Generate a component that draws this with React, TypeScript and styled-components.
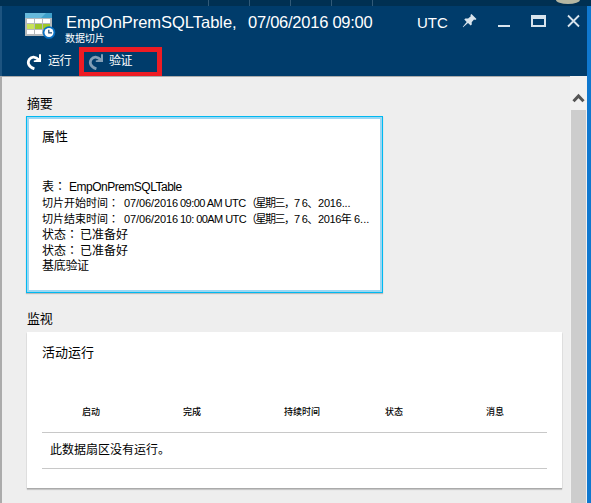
import React from "react";
import styled, { createGlobalStyle } from "styled-components";

const GlobalStyle = createGlobalStyle`
  * { box-sizing: border-box; }
  body {
    margin: 0;
    overflow: hidden;
    font-family: "Liberation Sans", "Noto Sans CJK SC", sans-serif;
    color: #000;
  }
`;

const Blade = styled.div`
  width: 591px;
  height: 503px;
  display: flex;
  flex-direction: column;
  border-right: 4px solid #0f78cf;
  background: #eee;
`;

const TopStrip = styled.div`
  flex: none;
  display: flex;
  justify-content: flex-end;
  width: 591px;
  height: 6px;
  padding-right: 11px;
  background: #003052;
  position: relative;
  z-index: 1;
`;

const Tick = styled.i`
  width: 41px;
  border-left: 1px solid #315a78;
`;

const TickRow = styled.div`
  display: flex;
  width: 348px;
`;

const Avatar = styled.div`
  width: 24px;
  height: 4px;
  border-radius: 0 0 50% 50% / 0 0 100% 100%;
  background: #b5b7a2;
`;

const Header = styled.header`
  flex: none;
  height: 70px;
  background: #003c6b;
  border-left: 2px solid #1d5480;
  color: #fff;
`;

const TitleBar = styled.div`
  display: flex;
  height: 41px;
  padding-left: 22px;
`;

const TitleIcon = styled.svg`
  flex: none;
  width: 32px;
  height: 28px;
  margin-top: 6px;
`;

const Titles = styled.div`
  width: 350px;
  padding-left: 9px;
`;

const TitleLine = styled.h1`
  display: flex;
  margin: 0;
  padding: 6px 0 0 1px;
  font-size: 16.5px;
  font-weight: 400;
  line-height: 20px;
`;

const Subtitle = styled.div`
  padding-top: 1px;
  font-size: 10px;
  line-height: 12px;
  letter-spacing: -0.1px;
`;

const Zone = styled.span`
  width: 42px;
  margin-left: 11px;
  padding-top: 6px;
  font-size: 15px;
  line-height: 21px;
`;

const WindowIcon = styled.svg<{ $gap: number; $w: number }>`
  flex: none;
  width: ${(p) => p.$w}px;
  height: 16px;
  margin: 7px 0 0 ${(p) => p.$gap}px;
`;

const Toolbar = styled.div`
  display: flex;
  height: 30px;
  padding-left: 24px;
`;

const Command = styled.button<{ $w: number; $marked?: boolean }>`
  display: flex;
  align-items: center;
  gap: ${(p) => (p.$marked ? 6 : 7)}px;
  width: ${(p) => p.$w}px;
  height: 30px;
  padding: 0 0 2px ${(p) => (p.$marked ? 4 : 0)}px;
  border: ${(p) => (p.$marked ? "5px solid #ed1c24" : "0")};
  background: none;
  color: #fff;
  font: 12px/16px "Liberation Sans", "Noto Sans CJK SC", sans-serif;
  letter-spacing: -0.4px;
  svg { flex: none; }
`;

const Body = styled.div`
  flex: 1;
  display: flex;
  min-height: 0;
  border-left: 2px solid #ababab;
`;

const Content = styled.main`
  flex: 1;
  padding: 18px 0 0 24px;
  border-top: 1px solid #ababab;
`;

const SectionTitle = styled.h2<{ $h: number; $top?: number }>`
  height: ${(p) => p.$h}px;
  margin: 0;
  padding: ${(p) => p.$top ?? 0}px 0 0 1px;
  font-size: 13px;
  font-weight: 400;
  line-height: 18px;
  letter-spacing: -0.2px;
`;

const SummaryCard = styled.section`
  width: 357px;
  height: 177px;
  padding: 10px 10px 0 15px;
  border: 1px solid #00b9f1;
  box-shadow: inset 0 0 0 2px #9bd7f3, 0 1px 1px #bbb;
  background: #fff;
`;

const CardTitle = styled.h3<{ $h: number }>`
  height: ${(p) => p.$h}px;
  margin: 0;
  font-size: 13px;
  font-weight: 400;
  line-height: 20px;
`;

const Line = styled.div<{ $size: number }>`
  display: flex;
  height: 15.9px;
  font-size: ${(p) => p.$size}px;
  line-height: 16px;
  white-space: pre;
`;

const Run = styled.span<{ $w?: number; $ls?: number }>`
  flex: none;
  width: ${(p) => (p.$w ? `${p.$w}px` : "auto")};
  letter-spacing: ${(p) => p.$ls ?? 0}px;
  white-space: pre;
`;

const Colon = styled.span`
  font-family: "Liberation Sans", "Noto Sans CJK TC", sans-serif;
`;

const MonitorCard = styled.section`
  width: 535px;
  height: 156px;
  margin-left: 1px;
  padding: 11px 15px 0;
  background: #fff;
  box-shadow: 0 1px 1px #aaa, 0 2px 1px #ccc;
`;

const HeadRow = styled.div`
  display: grid;
  grid-template-columns: repeat(5, 101px);
  height: 40px;
  padding: 13px 0 0 40px;
  border-bottom: 1px solid #c8c8c8;
  font-size: 9px;
  font-weight: 500;
  line-height: 12px;
`;

const EmptyRow = styled.div`
  height: 36px;
  padding-left: 8px;
  border-bottom: 1px solid #c8c8c8;
  font-size: 12px;
  line-height: 34px;
`;

const Scrollbar = styled.div`
  display: flex;
  flex-direction: column;
  width: 17px;
  padding: 16px 1px 0;
  background: #f1f1f1;
`;

const Thumb = styled.div`
  flex: 1;
  margin-top: 6px;
  background: #cdcdcd;
`;

const Redo = ({ color }: { color: string }) => (
  <svg width="15" height="17" viewBox="0 0 15 17">
    <path
      d="M8.4 15.8 C2.6 14 1 9.6 3.4 6.2 C5.6 3.2 9.4 3.2 13 7"
      fill="none"
      stroke={color}
      strokeWidth="2.8"
    />
    <path d="M15 1.2 V9 H7.8 V7.4 L11.5 6.8 L13 5.2 V1.2Z" fill={color} />
  </svg>
);

const columns = ["启动", "完成", "持续时间", "状态", "消息"];

export default function App() {
  return (
    <>
      <GlobalStyle />
      <Blade>
        <TopStrip>
          <TickRow>
            {[0, 1, 2, 3, 4].map((n) => <Tick key={n} />)}
          </TickRow>
          <Avatar />
        </TopStrip>
        <Header>
          <TitleBar>
            <TitleIcon viewBox="0 0 32 28">
              <path d="M1 1H28V24H1Z" fill="#b5b9bb" />
              <path d="M1 1H28V6H1Z" fill="#3fa0cb" />
              <path d="M1 1H22L17 6H1Z" fill="#66b9dc" />
              <path d="M3 7h7v4H3zM11 7h7v4h-7zM19 7h7v4h-7zM3 18h7v4H3zM11 18h7v4h-7zM19 18h7v4h-7z" fill="#fff" />
              <path d="M3 12h7v5H3z" fill="#c8e35a" />
              <path d="M11 12h7v5h-7zM19 12h7v5h-7z" fill="#9ec829" />
              <circle cx="25" cy="20.5" r="6.3" fill="#0871c5" />
              <circle cx="25" cy="20.5" r="4.5" fill="#fff" />
              <path d="M24.8 17.7V20.8H28" stroke="#164877" strokeWidth="1.2" fill="none" />
            </TitleIcon>
            <Titles>
              <TitleLine>
                <Run $w={182} $ls={-0.03}>EmpOnPremSQLTable,</Run>
                <Run $ls={-0.25}>07/06/2016 09:00</Run>
              </TitleLine>
              <Subtitle>数据切片</Subtitle>
            </Titles>
            <Zone>UTC</Zone>
            <WindowIcon $gap={3} $w={15} viewBox="0 0 15 16">
              <path d="M9.5 1 L14.5 6 L13.2 7 L12 6.6 L9.7 9.3 L9.8 11.6 L8.7 12.5 L6 10.1 L1.1 14.3 L0.8 13.8 L4.7 8.9 L2.3 6.5 L3.3 5.4 L6.1 5.4 L8.8 3.2 L8.4 2Z" fill="#d8e4ed" />
            </WindowIcon>
            <WindowIcon $gap={21} $w={12} viewBox="0 0 12 16">
              <path d="M0 12H12V14H0Z" fill="#d8e4ed" />
            </WindowIcon>
            <WindowIcon $gap={21} $w={15} viewBox="0 0 15 16">
              <path fillRule="evenodd" d="M0 2H15V14H0ZM2 6V12H13V6Z" fill="#d8e4ed" />
            </WindowIcon>
            <WindowIcon $gap={21} $w={13} viewBox="0 0 13 16">
              <path d="M1 2.5 L12 13.5 M12 2.5 L1 13.5" stroke="#d8e4ed" strokeWidth="1.8" />
            </WindowIcon>
          </TitleBar>
          <Toolbar>
            <Command $w={53}>
              <Redo color="#fff" />
              运行
            </Command>
            <Command $w={83} $marked>
              <Redo color="#819eb6" />
              验证
            </Command>
          </Toolbar>
        </Header>
        <Body>
          <Content>
            <SectionTitle $h={21}>摘要</SectionTitle>
            <SummaryCard>
              <CardTitle $h={52}>属性</CardTitle>
              <Line $size={12}>
                <Run $w={27}>表<Colon>：</Colon></Run>
                <Run $ls={-0.5}>EmpOnPremSQLTable</Run>
              </Line>
              <Line $size={11}>
                <Run $w={82}>切片开始时间<Colon>：</Colon></Run>
                <Run $w={56} $ls={-0.1}>07/06/2016</Run>
                <Run $w={66} $ls={-0.55}>09:00 AM UTC</Run>
                <Run $w={48} $ls={-1.5}>（星期三，</Run>
                <Run $w={24} $ls={-0.7}>7 6、</Run>
                <Run $ls={-0.2}>2016...</Run>
              </Line>
              <Line $size={11}>
                <Run $w={82}>切片结束时间<Colon>：</Colon></Run>
                <Run $w={56} $ls={-0.1}>07/06/2016</Run>
                <Run $w={66} $ls={-0.55}>10: 00AM UTC</Run>
                <Run $w={48} $ls={-1.5}>（星期三，</Run>
                <Run $w={24} $ls={-0.7}>7 6、</Run>
                <Run $w={36} $ls={-0.4}>2016年</Run>
                <Run>6...</Run>
              </Line>
              <Line $size={12}>
                <Run $w={38}>状态<Colon>：</Colon></Run>
                <Run>已准备好</Run>
              </Line>
              <Line $size={12}>
                <Run $w={38}>状态<Colon>：</Colon></Run>
                <Run>已准备好</Run>
              </Line>
              <Line $size={12}>
                <Run $ls={-0.3}>基底验证</Run>
              </Line>
            </SummaryCard>
            <SectionTitle $h={39} $top={17}>监视</SectionTitle>
            <MonitorCard>
              <CardTitle $h={50}>活动运行</CardTitle>
              <HeadRow>
                {columns.map((c) => <span key={c}>{c}</span>)}
              </HeadRow>
              <EmptyRow>此数据扇区没有运行。</EmptyRow>
            </MonitorCard>
          </Content>
          <Scrollbar>
            <svg width="15" height="12" viewBox="0 0 15 12">
              <path d="M2.5 9.3 L7.5 4 L12.5 9.3" fill="none" stroke="#555" strokeWidth="3" />
            </svg>
            <Thumb />
          </Scrollbar>
        </Body>
      </Blade>
    </>
  );
}
